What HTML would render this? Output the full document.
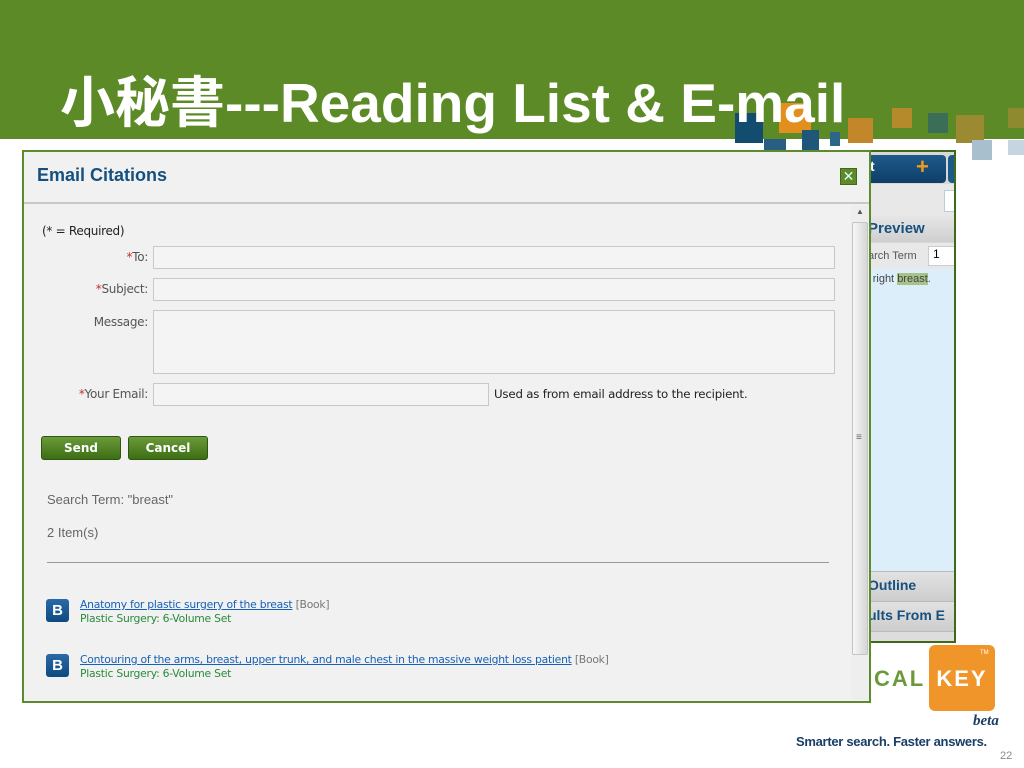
<!DOCTYPE html>
<html><head><meta charset="utf-8"><style>
*{margin:0;padding:0;box-sizing:border-box}
body{width:1024px;height:768px;background:#fff;position:relative;overflow:hidden;font-family:"Liberation Sans","DejaVu Sans",sans-serif}
.abs{position:absolute}
#banner{left:0;top:0;width:1024px;height:139px;background:#5b8a26}
#title{left:60px;top:70px;color:#fff;font-size:55px;font-weight:bold;font-family:"Liberation Sans","Noto Sans CJK TC",sans-serif;white-space:nowrap;line-height:66px}
.sq{position:absolute}
#back{left:866px;top:150px;width:90px;height:493px;background:#d8d8d8;border:2px solid #3f6a1a;border-left:none;overflow:hidden}
#dlg{left:22px;top:150px;width:849px;height:553px;background:#f1f1f1;border:2px solid #5e8a2e}
.lbl{position:absolute;font-size:12px;color:#555;text-align:right;font-family:"DejaVu Sans",sans-serif;letter-spacing:-0.3px}
.star{color:#c03030}
.inp{position:absolute;background:#f4f4f4;border:1px solid #c8c8c8}
.btn{position:absolute;top:284px;height:24px;background:linear-gradient(#6b9a3a,#3c6e14);border:1px solid #2f5510;border-radius:3px;color:#fff;font-weight:bold;font-size:12px;text-align:center;line-height:22px;font-family:"DejaVu Sans",sans-serif}
.bic{position:absolute;left:22px;width:23px;height:23px;background:linear-gradient(#2a6aa8,#0d4a80);border-radius:3px;color:#fff;font-weight:bold;font-size:15px;text-align:center;line-height:23px}
.lnk{position:absolute;left:56px;font-size:10.8px;line-height:14px;font-family:"DejaVu Sans",sans-serif;white-space:nowrap;letter-spacing:-0.25px}
.lnk a{color:#1560b8;text-decoration:underline}
.lnk .g{color:#2a8a3a}
.lnk .k{color:#777}
</style></head><body>
<div id="banner" class="abs"></div>
<div class="sq" style="left:735px;top:113px;width:28px;height:30px;background:#124c6e"></div>
<div class="sq" style="left:779px;top:103px;width:32px;height:30px;background:#e28f1e"></div>
<div class="sq" style="left:802px;top:130px;width:17px;height:20px;background:#20567a"></div>
<div class="sq" style="left:764px;top:139px;width:22px;height:12px;background:#2a5d82"></div>
<div class="sq" style="left:830px;top:132px;width:10px;height:14px;background:#2d6688"></div>
<div class="sq" style="left:848px;top:118px;width:25px;height:25px;background:#c2872a"></div>
<div class="sq" style="left:892px;top:108px;width:20px;height:20px;background:#b58a2a"></div>
<div class="sq" style="left:928px;top:113px;width:20px;height:20px;background:#3a6e58"></div>
<div class="sq" style="left:956px;top:115px;width:28px;height:28px;background:#9c8a32"></div>
<div class="sq" style="left:1008px;top:108px;width:16px;height:20px;background:#8e8a30"></div>
<div class="sq" style="left:972px;top:140px;width:20px;height:20px;background:#a8c0ce"></div>
<div class="sq" style="left:1008px;top:140px;width:16px;height:15px;background:#c6d6e0"></div>
<div id="title" class="abs">小秘書---Reading List &amp; E-mail</div>

<div id="back" class="abs">
 <div class="abs" style="left:0;top:3px;width:80px;height:28px;background:linear-gradient(#1d5a8a,#0e3f68);border-radius:0 4px 4px 0"></div>
 <div class="abs" style="left:4px;top:6px;color:#fff;font-size:14px;font-weight:bold">t</div>
 <div class="abs" style="left:50px;top:3px;color:#f09a20;font-size:22px;font-weight:bold;line-height:24px">+</div>
 <div class="abs" style="left:82px;top:3px;width:10px;height:28px;background:#1d5a8a;border-radius:4px"></div>
 <div class="abs" style="left:0;top:32px;width:90px;height:32px;background:#e8e8e8"></div>
 <div class="abs" style="left:78px;top:38px;width:12px;height:22px;background:#fff;border:1px solid #bcd"></div>
 <div class="abs" style="left:0;top:64px;width:90px;height:26px;background:linear-gradient(#e6e6e6,#cfcfcf)"></div>
 <div class="abs" style="left:2px;top:68px;color:#16507e;font-size:15px;font-weight:bold">Preview</div>
 <div class="abs" style="left:0;top:91px;width:90px;height:26px;background:#e8e8e8"></div>
 <div class="abs" style="left:2px;top:98px;color:#555;font-size:11px">arch Term</div>
 <div class="abs" style="left:62px;top:94px;width:28px;height:20px;background:#fff;border:1px solid #ccc;font-size:12px;padding-left:4px">1</div>
 <div class="abs" style="left:0;top:117px;width:90px;height:302px;background:#ddeefb"></div>
 <div class="abs" style="left:0;top:121px;color:#444;font-size:11px">r right <span style="background:#a6c38a">breast</span>.</div>
 <div class="abs" style="left:0;top:419px;width:90px;height:30px;background:linear-gradient(#e2e2e2,#cdcdcd);border-top:1px solid #bbb;color:#16507e;font-size:14px;font-weight:bold;padding:5px 0 0 2px">Outline</div>
 <div class="abs" style="left:0;top:449px;width:90px;height:30px;background:linear-gradient(#e2e2e2,#cdcdcd);border-top:1px solid #bbb;color:#16507e;font-size:14px;font-weight:bold;padding:5px 0 0 2px;white-space:nowrap">ults From E</div>
 <div class="abs" style="left:0;top:479px;width:90px;height:14px;background:#ddd;border-top:1px solid #bbb"></div>
</div>

<div id="dlg" class="abs">
 <div class="abs" style="left:13px;top:13px;color:#16507e;font-size:18px;font-weight:bold">Email Citations</div>
 <div class="abs" style="left:816px;top:16px;width:17px;height:17px;background:#5e8a2e;border:1px solid #3f6a1a;color:#dfe;font-size:14px;line-height:14px;text-align:center">✕</div>
 <div class="abs" style="left:0;top:50px;width:845px;height:2px;background:#c8c8c8"></div>
 <div class="abs" style="left:827px;top:53px;width:18px;height:495px;background:#eee"></div>
 <div class="abs" style="left:828px;top:70px;width:16px;height:433px;background:linear-gradient(90deg,#f7f7f7,#d6d6d6);border:1px solid #c4c4c4;border-radius:2px"></div>
 <div class="abs" style="left:832px;top:55px;font-size:8px;color:#555">▲</div>
 <div class="abs" style="left:832px;top:280px;font-size:10px;color:#666">≡</div>
 <div class="abs" style="left:18px;top:72px;font-size:12px;color:#222;font-family:'DejaVu Sans',sans-serif;letter-spacing:-0.3px">(* = Required)</div>
 <div class="lbl" style="left:20px;top:98px;width:104px"><span class="star">*</span>To:</div>
 <div class="inp" style="left:129px;top:94px;width:682px;height:23px"></div>
 <div class="lbl" style="left:20px;top:130px;width:104px"><span class="star">*</span>Subject:</div>
 <div class="inp" style="left:129px;top:126px;width:682px;height:23px"></div>
 <div class="lbl" style="left:20px;top:163px;width:104px">Message:</div>
 <div class="inp" style="left:129px;top:158px;width:682px;height:64px"></div>
 <div class="lbl" style="left:20px;top:235px;width:104px"><span class="star">*</span>Your Email:</div>
 <div class="inp" style="left:129px;top:231px;width:336px;height:23px"></div>
 <div class="abs" style="left:470px;top:235px;font-size:11.8px;color:#222;font-family:'DejaVu Sans',sans-serif;letter-spacing:-0.2px">Used as from email address to the recipient.</div>
 <div class="btn" style="left:17px;width:80px">Send</div>
 <div class="btn" style="left:104px;width:80px">Cancel</div>
 <div class="abs" style="left:23px;top:340px;font-size:13px;color:#666">Search Term: "breast"</div>
 <div class="abs" style="left:23px;top:373px;font-size:13px;color:#666">2 Item(s)</div>
 <div class="abs" style="left:23px;top:410px;width:782px;height:1px;background:#999"></div>
 <div class="bic" style="top:447px">B</div>
 <div class="lnk" style="top:446px"><a>Anatomy for plastic surgery of the breast</a> <span class="k">[Book]</span><br><span class="g">Plastic Surgery: 6-Volume Set</span></div>
 <div class="bic" style="top:502px">B</div>
 <div class="lnk" style="top:501px"><a>Contouring of the arms, breast, upper trunk, and male chest in the massive weight loss patient</a> <span class="k">[Book]</span><br><span class="g">Plastic Surgery: 6-Volume Set</span></div>
</div>

<div class="abs" style="left:874px;top:666px;color:#6a9a3a;font-size:22px;font-weight:bold;letter-spacing:2px">CAL</div>
<div class="abs" style="left:929px;top:645px;width:66px;height:66px;background:#f0952a;border-radius:6px;color:#fff;font-size:22px;font-weight:bold;text-align:center;line-height:68px;letter-spacing:2px">KEY</div>
<div class="abs" style="left:980px;top:650px;color:#fff;font-size:6px">TM</div>
<div class="abs" style="left:973px;top:713px;color:#1a3e66;font-size:15px;font-weight:bold;font-style:italic;font-family:'Liberation Serif',serif">beta</div>
<div class="abs" style="left:796px;top:734px;color:#1a3e66;font-size:13px;font-weight:bold;white-space:nowrap;letter-spacing:-0.3px">Smarter search. Faster answers.</div>
<div class="abs" style="left:1000px;top:750px;color:#888;font-size:11px">22</div>
</body></html>
